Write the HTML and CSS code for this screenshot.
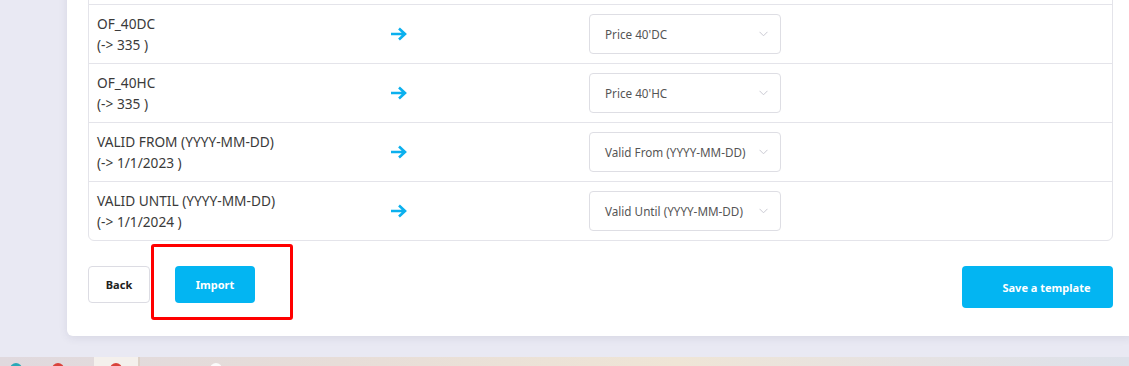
FILE: index.html
```html
<!doctype html>
<html><head>
    <meta charset="utf-8">
    <link rel="stylesheet" href="styles.css">
</head>
<body>
    <div class='page'>
        <div class='card'>
            <div class='map-table'>
                <!-- row scrolled out of view above -->
                <div class='map-row'></div>
                <div class='map-row'>
                    <div class='field'>OF_40DC<br>(-&gt; 335 )</div>
                    <div class='arrow'><svg width="18" height="14" viewBox="0 0 18 14"><path d="M1 7h14M9 1.5l6 5.5-6 5.5" fill="none" stroke="#0bb0ee" stroke-width="2.6"/></svg></div>
                    <div class='select'><span>Price 40'DC</span><svg width="9" height="6" viewBox="0 0 9 6"><path d="M0.5 0.8l4 4 4-4" fill="none" stroke="#c9c9d2" stroke-width="1"/></svg></div>
                </div>
                <div class='map-row'>
                    <div class='field'>OF_40HC<br>(-&gt; 335 )</div>
                    <div class='arrow'><svg width="18" height="14" viewBox="0 0 18 14"><path d="M1 7h14M9 1.5l6 5.5-6 5.5" fill="none" stroke="#0bb0ee" stroke-width="2.6"/></svg></div>
                    <div class='select'><span>Price 40'HC</span><svg width="9" height="6" viewBox="0 0 9 6"><path d="M0.5 0.8l4 4 4-4" fill="none" stroke="#c9c9d2" stroke-width="1"/></svg></div>
                </div>
                <div class='map-row'>
                    <div class='field'>VALID FROM (YYYY-MM-DD)<br>(-&gt; 1/1/2023 )</div>
                    <div class='arrow'><svg width="18" height="14" viewBox="0 0 18 14"><path d="M1 7h14M9 1.5l6 5.5-6 5.5" fill="none" stroke="#0bb0ee" stroke-width="2.6"/></svg></div>
                    <div class='select'><span>Valid From (YYYY-MM-DD)</span><svg width="9" height="6" viewBox="0 0 9 6"><path d="M0.5 0.8l4 4 4-4" fill="none" stroke="#c9c9d2" stroke-width="1"/></svg></div>
                </div>
                <div class='map-row'>
                    <div class='field'>VALID UNTIL (YYYY-MM-DD)<br>(-&gt; 1/1/2024 )</div>
                    <div class='arrow'><svg width="18" height="14" viewBox="0 0 18 14"><path d="M1 7h14M9 1.5l6 5.5-6 5.5" fill="none" stroke="#0bb0ee" stroke-width="2.6"/></svg></div>
                    <div class='select'><span>Valid Until (YYYY-MM-DD)</span><svg width="9" height="6" viewBox="0 0 9 6"><path d="M0.5 0.8l4 4 4-4" fill="none" stroke="#c9c9d2" stroke-width="1"/></svg></div>
                </div>
            </div>

            <div class='actions'>
                <button class='btn btn-back'>Back</button>
                <button class='btn btn-import'>Import</button>
                <div class='highlight'></div>
                <button class='btn btn-save'>Save a template</button>
            </div>
        </div>
    </div>

    <div class='taskbar'>
        <span class='dot dot-teal'></span>
        <span class='dot dot-red'></span>
        <span class='tab'><span class='dot dot-red'></span></span>
        <span class='dot dot-white'></span>
    </div>
</body></html>
```

FILE: styles.css
```css
html, body {
    margin: 0;
    height: 366px;
    overflow: hidden;
}

body {
    background: #e9e9f3;
    font-family: "Noto Sans", "Open Sans", sans-serif;
    color: #333;
}

.page {
    height: 357px;
    padding-left: 67px;
    overflow: hidden;
}

.card {
    width: 1067px;
    margin-top: -75px;
    box-sizing: border-box;
    padding: 20px 21px 28px 21px;
    background: #fff;
    border-radius: 0 0 6px 6px;
    box-shadow: 0 2px 8px rgba(60, 60, 100, 0.10);
}

/* mapping table */
.map-table {
    border: 1px solid #e4e4ea;
    border-radius: 6px;
}

.map-row {
    display: grid;
    grid-template-columns: 293px 199px 192px;
    align-items: center;
    height: 58px;
    padding-left: 8px;
    border-bottom: 1px solid #e4e4ea;
}

.map-row:last-child {
    border-bottom: none;
}

.field {
    font-size: 13.7px;
    line-height: 21px;
    color: #3a3a3a;
}

.arrow {
    display: flex;
    align-items: center;
    height: 14px;
}

.select {
    display: flex;
    align-items: center;
    justify-content: space-between;
    height: 38px;
    padding: 0 12px 0 15px;
    border: 1px solid #dedee4;
    border-radius: 4px;
    font-size: 11.7px;
    color: #555;
}

/* buttons */
.actions {
    position: relative;
    display: flex;
    align-items: flex-start;
    margin-top: 25px;
}

.btn {
    font-family: "Noto Sans", "Open Sans", sans-serif;
    font-size: 11px;
    font-weight: bold;
    border-radius: 4px;
    cursor: pointer;
}

.btn-back {
    width: 62px;
    height: 37px;
    background: #fff;
    color: #222;
    border: 1px solid #dcdce3;
}

.btn-import {
    width: 80px;
    height: 37px;
    margin-left: 25px;
    background: #03b5f2;
    color: #fff;
    border: none;
}

.btn-save {
    width: 151px;
    height: 42px;
    margin-left: auto;
    padding-left: 24px;
    background: #03b5f2;
    color: #fff;
    border: none;
}

/* red annotation box */
.highlight {
    position: absolute;
    left: 63px;
    top: -22px;
    width: 136px;
    height: 70px;
    border: 3px solid #f00;
    border-radius: 3px;
}

/* bottom strip */
.taskbar {
    display: flex;
    align-items: flex-start;
    gap: 30px;
    height: 9px;
    padding-left: 10px;
    overflow: hidden;
    background: linear-gradient(90deg, #e0d9de 0%, #e7ddd8 30%, #efe5d6 60%, #e6e2e2 80%, #dde1ea 100%);
}

.tab {
    display: flex;
    justify-content: center;
    width: 44px;
    height: 9px;
    background: #f4f0ec;
    border-right: 2px solid #ddd2c8;
}

.dot {
    display: block;
    width: 12px;
    height: 12px;
    margin-top: 6px;
    border-radius: 50%;
}

.dot-teal { background: #2aa9b8; }
.dot-red { background: #d9433b; }
.dot-white { background: #fbfbfb; margin-left: 40px; }
```
